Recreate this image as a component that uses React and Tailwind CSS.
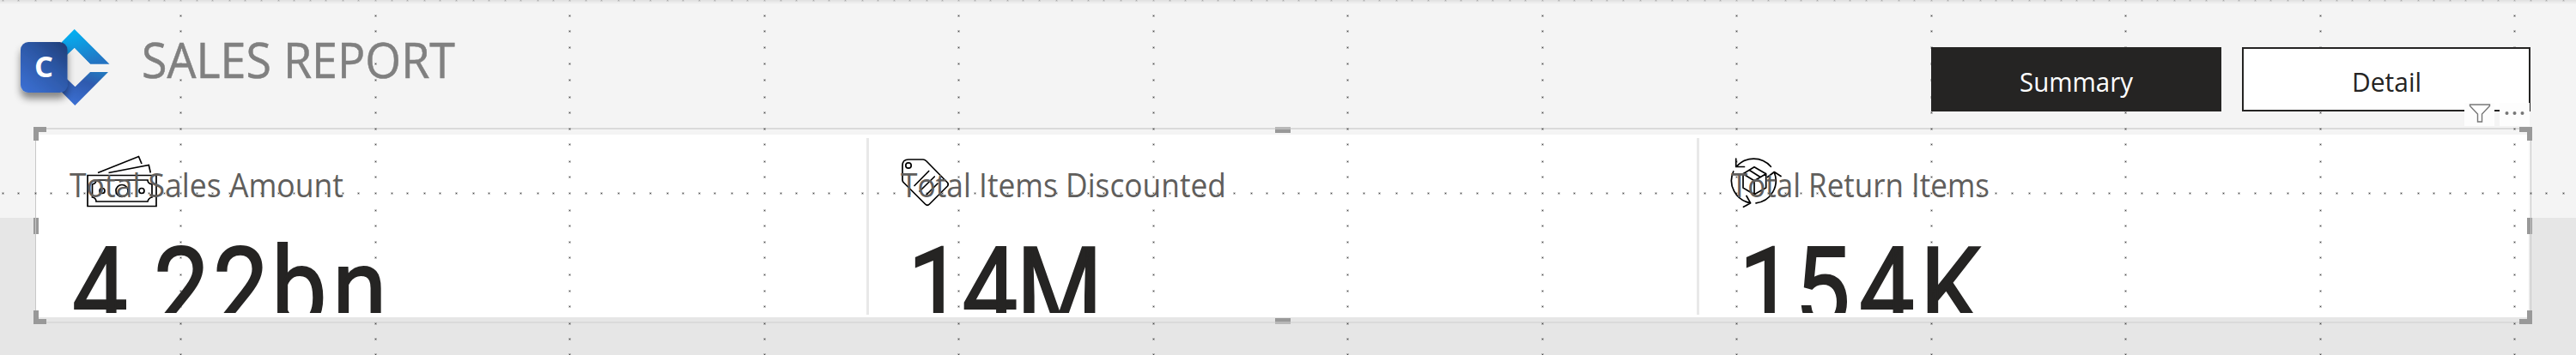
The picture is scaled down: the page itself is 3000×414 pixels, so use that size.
const ROWS = [18, 36, 55, 74, 93, 113, 131, 150, 168, 188, 206, 225, 245, 263, 282, 300, 320, 339, 357, 377, 395, 413];
const OFFSETS = [0, 19, 37, 57, 75, 94, 114, 132, 151, 169, 189, 207];
const dots = [];
for (let c = -1; c < 13; c++) {
  const x = Math.floor(210.6 + c * 226.5);
  ROWS.forEach((y) => dots.push([x, y]));
  OFFSETS.forEach((o, i) => {
    dots.push([x + o, 0]);
    if (i) dots.push([x + o, 225]);
  });
}

function GridDots() {
  return (
    <svg className="absolute inset-0" width="3000" height="414">
      {dots.map(([x, y], i) => (
        <g key={i} opacity={y === 0 ? 0.35 : 1}>
          <rect x={x - 1} y={y - 1} width="3" height="3" fill="#000" opacity="0.2" />
          <rect x={x} y={y} width="1" height="1" fill="#444" />
        </g>
      ))}
    </svg>
  );
}

function Logo() {
  return (
    <svg width="150" height="148" className="shrink-0">
      <defs>
        <linearGradient id="top" x1="0.2" y1="0" x2="0.6" y2="1">
          <stop offset="0" stopColor="#00b4f5" />
          <stop offset="1" stopColor="#2474c2" />
        </linearGradient>
        <linearGradient id="bot" x1="0.8" y1="0" x2="0.3" y2="1">
          <stop offset="0" stopColor="#2376bd" />
          <stop offset="0.35" stopColor="#2f5aae" />
          <stop offset="1" stopColor="#3b6fd2" />
        </linearGradient>
        <linearGradient id="sq" x1="0.1" y1="1" x2="0.9" y2="0">
          <stop offset="0" stopColor="#3b6fd2" />
          <stop offset="0.6" stopColor="#2c57a5" />
          <stop offset="1" stopColor="#213f7a" />
        </linearGradient>
        <filter id="sh" x="-40%" y="-40%" width="180%" height="190%">
          <feDropShadow dx="0" dy="7" stdDeviation="4.5" floodOpacity="0.45" />
        </filter>
      </defs>
      <path d="M86.700 34L127.500 74.700H105L86.700 56L72 72V49Z" fill="url(#top)" />
      <path d="M87.300 123L126 84H104.500L87.500 101L72 86V107.500Z" fill="url(#bot)" />
      <path d="M78 64L86.700 56L105 74.700V84L87.500 101L78 92Z" fill="#f0f0f0" />
      <rect x="24" y="49" width="54.500" height="59" rx="9" fill="url(#sq)" filter="url(#sh)" />
      <text x="40" y="90" textLength="22" lengthAdjust="spacingAndGlyphs" className="fill-white font-['Open_Sans'] text-[34px] font-bold">C</text>
    </svg>
  );
}

const Cash = () => (
  <svg className="absolute left-[58px] top-[22px]" width="86" height="64" fill="none" stroke="#000" strokeWidth="1.7">
    <path d="M14 22.500L61.500 3.500L65 12M26.500 22.500L73.300 13.500L75.300 22.500M2 25.500H82V61.500H2ZM12 31H72Q72 35 77 36V51Q73 52 72 56H12Q12 52 7.500 51V36Q12 35 12 31Z" />
    <circle cx="42" cy="43.500" r="7" />
    <circle cx="19" cy="43.500" r="3" />
    <circle cx="65" cy="43.500" r="3" />
  </svg>
);

const Tag = () => (
  <svg className="absolute left-[37px] top-[22px]" width="62" height="64" fill="none" stroke="#000" strokeWidth="1.7" strokeLinejoin="round" strokeLinecap="round">
    <path d="M9 7H26Q28 7 30 9L54.500 34Q56 36 54.500 38L33.500 59Q31 61.500 28.500 59L3.500 34Q2 33 2 31V14Q2 7 9 7ZM32.700 20.500L16 37.500M39.300 27L22 44M43 35L30 48" />
    <circle cx="9" cy="14" r="3.200" />
  </svg>
);

const Return = () => (
  <svg className="absolute left-[34px] top-[22px]" width="66" height="66" fill="none" stroke="#000" strokeWidth="1.7" strokeLinecap="round" strokeLinejoin="round">
    <path d="M9.300 15.300A26.300 26.300 0 0 1 49.300 15.300M8.700 6V15.500H18.500M5.700 21A26.300 26.300 0 0 0 25 57.500M21 49.500L25.700 57.800L17.500 62.300M32 57.800A26.300 26.300 0 0 0 53.300 22M45.500 27.500L53.300 21.500L61 26.500" />
    <path d="M30 15.700L43.700 23.700V40L30 47.700L17 40V23.700ZM17 23.700L30 31.700L43.700 23.700M30 31.700V47.700M24 19.300L37 27.500" />
  </svg>
);

const cards = [
  { label: "Total Sales Amount", value: "4.22bn", Icon: Cash, grow: "w-[967px]", x: 39, tw: 319, gx: [42, 112, 137, 206, 274, 345] },
  { label: "Total Items Discounted", value: "14M", Icon: Tag, grow: "w-[967px] border-l-3", x: 37, tw: 379, gx: [45, 108.5, 171.5] },
  { label: "Total Return Items", value: "154K", Icon: Return, grow: "w-[969px] border-l-3", x: 37, tw: 301, gx: [46, 111, 186, 257] },
];

function Card({ label, value, Icon, grow, x, tw, gx }) {
  return (
    <div className={"h-[206px] shrink-0 border-[#e8e8e8] " + grow}>
      <div className="relative z-10 -mt-1 h-[208px] overflow-hidden">
        <Icon />
        <svg className="relative block" width="600" height="208">
          <text x={x} y="73.200" textLength={tw} lengthAdjust="spacingAndGlyphs" className="fill-[#605e5c] font-['Open_Sans'] text-[37.5px]">{label}</text>
          <text x={gx.map((g) => (g / 0.88).toFixed(1)).join(" ")} y="224.700" transform="scale(0.88 1)" stroke="#252423" strokeWidth="1.8" className="fill-[#252423] font-['Roboto'] text-[131px]">{value}</text>
        </svg>
      </div>
    </div>
  );
}

function Button({ label, tw, className }) {
  return (
    <div className={"flex h-[75px] items-center justify-center border-2 border-[#252423] " + className}>
      <svg width={tw} height="50" className="overflow-visible">
        <text x="0" y="38.500" textLength={tw} lengthAdjust="spacingAndGlyphs" className="font-['Open_Sans'] text-[31px]" fill="currentColor">{label}</text>
      </svg>
    </div>
  );
}

function SelectionFrame() {
  return (
    <div className="absolute left-[39px] top-[148px] z-20 flex h-[230px] w-[2910px] flex-col justify-between">
      <div className="flex items-start justify-between">
        <i className="h-4 w-[15px] border-l-6 border-t-6 border-[#999]" />
        <i className="h-[7px] w-[18px] border-t-3 border-[#b8b8b8] bg-[#999]" />
        <i className="h-4 w-[15px] border-r-6 border-t-6 border-[#999]" />
      </div>
      <div className="flex justify-between">
        <i className="h-[19px] w-[6px] bg-[linear-gradient(90deg,#999_2px,#c4c4c4_2px,#c4c4c4_3px,#999_3px)]" />
        <i className="h-[19px] w-[6px] bg-[linear-gradient(90deg,#999_4px,#c4c4c4_4px,#c4c4c4_5px,#999_5px)]" />
      </div>
      <div className="flex items-end justify-between">
        <i className="h-4 w-[15px] border-b-6 border-l-6 border-[#999]" />
        <i className="h-[7px] w-[18px] border-b-3 border-[#b8b8b8] bg-[#999]" />
        <i className="h-4 w-[15px] border-b-6 border-r-6 border-[#999]" />
      </div>
    </div>
  );
}

export default function App() {
  return (
    <div className="relative h-[414px] w-[3000px] overflow-hidden bg-[linear-gradient(#e0e0e0_0px,#f4f4f4_5px,#f4f4f4_254px,#e6e6e6_254px)]">
      <GridDots />
      <header className="relative z-10 flex h-[149px]">
        <Logo />
        <svg width="400" height="148">
          <text x="15" y="91" textLength="365" lengthAdjust="spacingAndGlyphs" stroke="#808080" strokeWidth="0.5" className="fill-[#808080] font-['Open_Sans'] text-[56px]">SALES REPORT</text>
        </svg>
        <div className="ml-auto mr-[53px] flex gap-6 pt-[55px]">
          <Button label="Summary" tw={132} className="w-[338px] bg-[#252423] text-white" />
          <Button label="Detail" tw={81} className="w-[336px] bg-white text-[#252423]" />
        </div>
      </header>
      <section className="ml-[41px] h-[228px] w-[2907px] border-x border-y-2 border-x-[#c8c8c8] border-y-[#dadada] pr-[2px] pt-[6px]">
        <div className="flex h-[213px] bg-white pt-1">
          {cards.map((c) => <Card key={c.label} {...c} />)}
        </div>
      </section>
      <SelectionFrame />
      <div className="absolute left-[2870px] top-[120px] z-20 flex h-[27px] gap-[6px]">
        <div className="w-[35px] bg-[#fdfdfd]">
          <svg width="35" height="27" fill="#fff" stroke="#777" strokeWidth="1.4">
            <path d="M6.500 2H29.500V3.500L20.500 13V22H15.500V13L6.500 3.500Z" />
          </svg>
        </div>
        <div className="w-[35px] bg-[#fdfdfd]">
          <svg width="35" height="27" fill="#777">
            <circle cx="8.500" cy="12" r="2" />
            <circle cx="17.500" cy="12" r="2" />
            <circle cx="26.500" cy="12" r="2" />
          </svg>
        </div>
      </div>
    </div>
  );
}
